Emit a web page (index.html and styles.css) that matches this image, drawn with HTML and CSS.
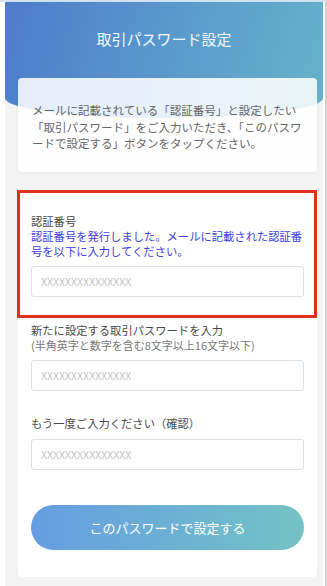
FILE: index.html
```html
<!DOCTYPE html>
<html lang="ja">
<head>
    <meta charset="UTF-8">
    <meta name="viewport" content="width=device-width, initial-scale=1.0">
    <title>取引パスワード設定</title>
    <link rel="stylesheet" href="styles.css">
</head>
<body>
    <div class="screen">
        <header class="header">
            <h1 class="title">取引パスワード設定</h1>
        </header>

        <div class="info-card">
            <p>メールに記載されている「認証番号」と設定したい「取引パスワード」をご入力いただき、「このパスワードで設定する」ボタンをタップください。</p>
        </div>

        <form class="form-card">
            <div class="highlight">
                <label class="label" for="code">認証番号</label>
                <p class="notice">認証番号を発行しました。メールに記載された認証番号を以下に入力してください。</p>
                <input class="field" id="code" type="text" placeholder="XXXXXXXXXXXXXXX">
            </div>

            <div class="group">
                <label class="label" for="newpass">新たに設定する取引パスワードを入力</label>
                <p class="hint">(半角英字と数字を含む8文字以上16文字以下)</p>
                <input class="field" id="newpass" type="password" placeholder="XXXXXXXXXXXXXXX">
            </div>

            <div class="group">
                <label class="label" for="confirm">もう一度ご入力ください（確認）</label>
                <input class="field" id="confirm" type="password" placeholder="XXXXXXXXXXXXXXX">
            </div>

            <button class="submit" type="button">このパスワードで設定する</button>
        </form>
    </div>
</body>
</html>
```

FILE: styles.css
```css
body {
    margin: 0;
    background: #fff;
    font-family: "Noto Sans CJK JP", "Noto Sans", sans-serif;
    border-top: 2px solid #d3e0ee;
}
.screen {
    margin-left: 5px;
    height: 584px;
    background: #f3f3f3;
    overflow: hidden;
    width: 318px;
    box-shadow: 2px 0 0 #fff, 4px 0 0 #cfcfcf;
}
.header {
    height: 116px;
    background: linear-gradient(105deg, #4e7bcc 0%, #5a9ccc 55%, #66b3ca 100%);
    border-radius: 0 0 50% 50% / 0 0 20px 20px;
}
.title {
    margin: 0;
    padding-top: 27px;
    text-align: center;
    color: #f4f7fb;
    font-size: 15px;
    font-weight: 400;
    line-height: 20px;
}
.info-card {
    margin: -40px 6px 0 13px;
    background: rgba(255, 255, 255, 0.86);
    border-radius: 4px;
    padding: 24px 10px 20px 14px;
    box-shadow: 0 1px 3px rgba(0, 0, 0, 0.05);
}
.info-card p {
    margin: 0;
    color: #666;
    font-size: 11.5px;
    line-height: 16.5px;
}
.form-card {
    margin: 18px 6px 0 13px;
    background: #fff;
    border-radius: 4px;
    padding: 0 13px 27px 13px;
}
.highlight {
    margin: 0 -13px 0 -14px;
    border: 3px solid #e0301f;
    padding: 20px 10px 18px 11px;
}
.label {
    display: block;
    color: #4a4a4a;
    font-size: 11.3px;
    line-height: 16px;
}
.notice {
    margin: 0 0 6px;
    color: #3d3de6;
    font-size: 11.3px;
    line-height: 15.5px;
}
.hint {
    margin: 0 0 7px;
    color: #777;
    font-size: 11px;
    line-height: 15px;
}
.field {
    display: block;
    box-sizing: border-box;
    width: 100%;
    height: 31px;
    border: 1px solid #dce2ea;
    border-radius: 3px;
    padding: 0 9px;
    font-family: "Noto Sans CJK JP", sans-serif;
    font-size: 10.5px;
    background: #fff;
}
.field::placeholder {
    color: #c4c4c4;
}
.group {
    padding-top: 4px;
}
.group + .group {
    padding-top: 24px;
}
.group + .group .label {
    margin-bottom: 8px;
}
.submit {
    display: block;
    width: 100%;
    height: 45px;
    margin-top: 35px;
    border: none;
    border-radius: 23px;
    background: linear-gradient(90deg, #669de3 0%, #6cb2d2 55%, #74c3c5 100%);
    color: #fff;
    font-family: "Noto Sans CJK JP", sans-serif;
    font-size: 13px;
    cursor: pointer;
}
```
